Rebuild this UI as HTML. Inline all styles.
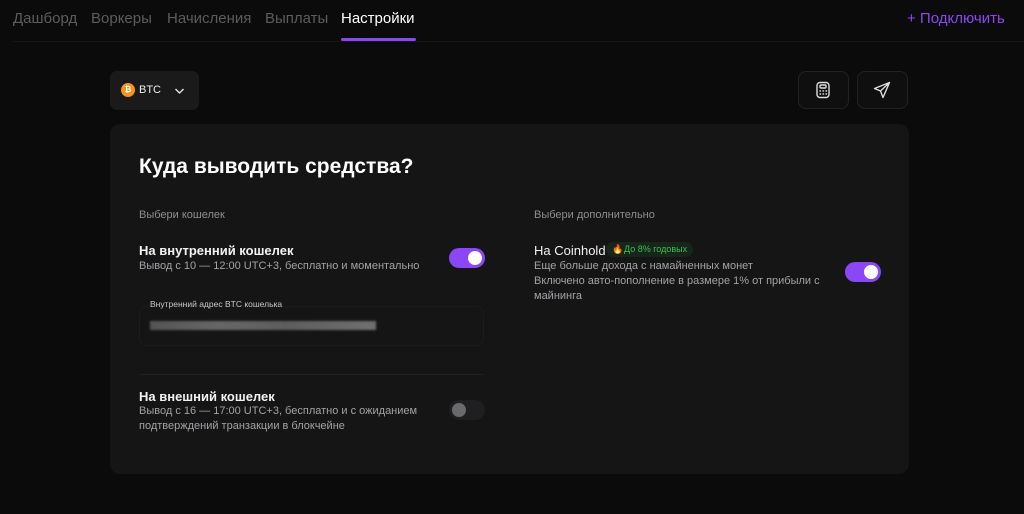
<!DOCTYPE html>
<html><head><meta charset="utf-8"><style>
*{margin:0;padding:0;box-sizing:border-box}
body{width:1024px;height:514px;background:#0b0b0c;font-family:"Liberation Sans",sans-serif;position:relative;overflow:hidden;color:#fff}
.a{position:absolute;white-space:nowrap}
.nav{top:10px;font-size:15px;color:#5c5c60}
.g{color:#8e8e93;font-size:11px}
.s{color:#a3a3a8;font-size:11px}
.t{color:#f2f2f2;font-size:13px;font-weight:bold}
.tog{position:absolute;width:36px;height:20px;border-radius:10px;background:#8b46f5}
.tog::after{content:"";position:absolute;right:3px;top:3px;width:14px;height:14px;border-radius:50%;background:#fff}
.off{background:#1f1f21}.off::after{left:3px;right:auto;background:#6a6a6d}
.btn{position:absolute;top:71px;width:51px;height:38px;border:1px solid #222225;border-radius:8px;background:#0f0f10}
</style></head><body>
<div class="a nav" style="left:13px">Дашборд</div>
<div class="a nav" style="left:91px">Воркеры</div>
<div class="a nav" style="left:167px">Начисления</div>
<div class="a nav" style="left:265px">Выплаты</div>
<div class="a nav" style="left:341px;color:#fff">Настройки</div>
<div class="a" style="left:341px;top:38px;width:75px;height:3px;background:#8b46f5;border-radius:2px"></div>
<div class="a" style="left:13px;top:41px;width:1011px;height:1px;background:#161618"></div>
<div class="a" style="left:907px;top:10px;font-size:15px;color:#8b46f5">+ Подключить</div>

<div class="a" style="left:110px;top:71px;width:89px;height:39px;background:#1a1a1b;border-radius:7px"></div>
<div class="a" style="left:121px;top:83px;width:14px;height:14px;border-radius:50%;background:#f7931a;color:#fff;font-size:8px;text-align:center;line-height:14px;font-weight:bold">₿</div>
<div class="a" style="left:139px;top:84px;font-size:11px;color:#eee">BTC</div>
<svg class="a" style="left:174px;top:87px" width="11" height="8" viewBox="0 0 11 8"><path d="M1.5 2l4 4 4-4" fill="none" stroke="#ddd" stroke-width="1.5"/></svg>

<div class="btn" style="left:798px"></div>
<svg class="a" style="left:814px;top:81px" width="18" height="18" viewBox="0 0 18 18" fill="none" stroke="#ddd" stroke-width="1.4"><rect x="3" y="1.5" width="12" height="15" rx="3"/><rect x="6" y="4" width="6" height="3" rx="1"/><path d="M6 10h.5M9 10h.5M12 10h.5M6 13h.5M9 13h.5M12 13h.5" stroke-linecap="round"/></svg>
<div class="btn" style="left:857px"></div>
<svg class="a" style="left:873px;top:81px" width="18" height="18" viewBox="0 0 18 18" fill="none" stroke="#ddd" stroke-width="1.4" stroke-linejoin="round"><path d="M16.5 1.5L1.5 7.5l6 2.5 2.5 6.5z M16.5 1.5L7.5 10"/></svg>

<div class="a" style="left:110px;top:124px;width:799px;height:350px;background:#151516;border-radius:10px"></div>
<div class="a" style="left:139px;top:155px;font-size:21px;font-weight:bold;color:#fff">Куда выводить средства?</div>
<div class="a g" style="left:139px;top:209px">Выбери кошелек</div>
<div class="a t" style="left:139px;top:243px">На внутренний кошелек</div>
<div class="a s" style="left:139px;top:260px">Вывод с 10 — 12:00 UTC+3, бесплатно и моментально</div>
<div class="tog" style="left:449px;top:248px"></div>

<div class="a" style="left:139px;top:306px;width:345px;height:40px;border:1px solid #1c1c1e;border-radius:8px"></div>
<div class="a" style="left:150px;top:299px;font-size:8.5px;color:#c8c8cc">Внутренний адрес BTC кошелька</div>
<div class="a" style="left:150px;top:321px;width:226px;height:9px;background:linear-gradient(90deg,#888,#aaa 30%,#999 60%,#bbb);opacity:.55;filter:blur(1px)"></div>
<div class="a" style="left:139px;top:374px;width:345px;height:1px;background:#202022"></div>

<div class="a t" style="left:139px;top:389px">На внешний кошелек</div>
<div class="a s" style="left:139px;top:405px">Вывод с 16 — 17:00 UTC+3, бесплатно и с ожиданием</div>
<div class="a s" style="left:139px;top:420px">подтверждений транзакции в блокчейне</div>
<div class="tog off" style="left:449px;top:400px"></div>

<div class="a g" style="left:534px;top:209px">Выбери дополнительно</div>
<div class="a t" style="left:534px;top:243px;font-weight:normal">На Coinhold</div>
<div class="a" style="left:606px;top:242px;width:87px;height:15px;border-radius:8px;background:#16261a"></div>
<div class="a" style="left:612px;top:244px;font-size:9px">🔥</div>
<div class="a" style="left:624px;top:244px;font-size:9px;color:#3fbf4f">До 8% годовых</div>
<div class="a s" style="left:534px;top:260px">Еще больше дохода с намайненных монет</div>
<div class="a s" style="left:534px;top:275px">Включено авто-пополнение в размере 1% от прибыли с</div>
<div class="a s" style="left:534px;top:290px">майнинга</div>
<div class="tog" style="left:845px;top:262px"></div>
</body></html>
